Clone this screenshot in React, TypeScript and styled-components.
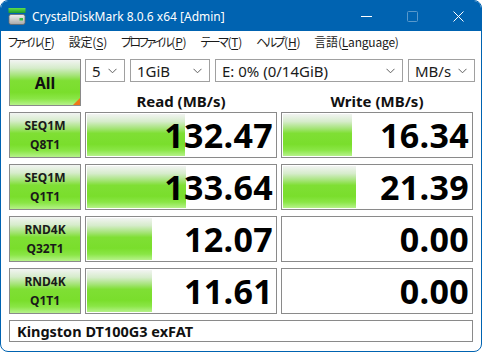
import styled, { createGlobalStyle } from 'styled-components';

const GlobalStyle = createGlobalStyle`
  html, body {
    margin: 0;
    padding: 0;
    background: #ffffff;
  }
  body {
    font-family: "Noto Sans", "Noto Sans CJK JP", sans-serif;
  }
`;

const BLUE = '#0063b1';

const Window = styled.div`
  width: 482px;
  height: 352px;
  box-sizing: border-box;
  border: 1px solid ${BLUE};
  border-radius: 8px;
  overflow: hidden;
  display: flex;
  flex-direction: column;
  background: #ffffff;
`;

const TitleBar = styled.div`
  height: 30px;
  flex: none;
  background: ${BLUE};
  display: flex;
  align-items: center;
  color: #ffffff;
`;

const AppIcon = styled.svg`
  width: 18px;
  height: 18px;
  margin: 0 6px 0 7px;
  flex: none;
`;

const Title = styled.div`
  font-size: 12px;
  flex: 1;
  white-space: nowrap;
`;

const Caption = styled.div<{ $dim?: boolean }>`
  width: 46px;
  height: 30px;
  display: flex;
  align-items: center;
  justify-content: center;
  opacity: ${p => (p.$dim ? 0.35 : 1)};
`;

const MenuBar = styled.div`
  height: 21px;
  flex: none;
  display: flex;
  align-items: center;
  gap: 14px;
  padding: 0 7px;
  font-family: "Noto Sans CJK JP", "Noto Sans", sans-serif;
  font-feature-settings: "palt";
  font-size: 12px;
  color: #1a1a1a;
  background: #ffffff;
`;

const MenuItem = styled.span`
  white-space: nowrap;
  letter-spacing: -0.2px;
  u {
    text-underline-offset: 2px;
  }
`;

const Kana = styled.span`
  letter-spacing: -2.5px;
  margin-right: 1px;
`;

const Body = styled.div`
  flex: 1;
  display: flex;
  flex-direction: column;
  gap: 6px;
  padding: 7px 8px 0 8px;
`;

const Grid = styled.div<{ $height: number }>`
  display: grid;
  grid-template-columns: 72px 192px 192px;
  column-gap: 4px;
  height: ${p => p.$height}px;
`;

const greenFill = `linear-gradient(to bottom,
  #f2f4f2 0%,
  #d6eccb 18%,
  #a6e47a 34%,
  #7fdf34 46%,
  #7ade2c 72%,
  #8ae646 86%,
  #b6f28a 100%)`;

const AllButton = styled.div`
  position: relative;
  grid-row: span 2;
  box-sizing: border-box;
  border: 1px solid #8a8a8a;
  background: ${greenFill};
  display: flex;
  align-items: center;
  justify-content: center;
  font-weight: 700;
  font-size: 16px;
  color: #111;
  &::after {
    content: '';
    position: absolute;
    right: 0;
    bottom: 0;
    width: 0;
    height: 0;
    border-style: solid;
    border-width: 0 0 7px 7px;
    border-color: transparent transparent #f07818 transparent;
  }
`;

const TopRight = styled.div`
  grid-column: span 2;
  display: grid;
  grid-template-rows: 23px 24px;
`;

const SelectRow = styled.div`
  display: flex;
  gap: 5px;
`;

const Select = styled.div<{ $w: number }>`
  width: ${p => p.$w}px;
  height: 23px;
  box-sizing: border-box;
  border: 1px solid #a0a0a0;
  background: #ffffff;
  display: flex;
  align-items: center;
  justify-content: space-between;
  padding: 0 7px 0 6px;
  font-size: 15px;
  color: #1a1a1a;
  white-space: nowrap;
`;

const Headers = styled.div`
  display: grid;
  grid-template-columns: 192px 192px;
  column-gap: 4px;
  align-items: end;
`;

const Header = styled.div`
  text-align: center;
  font-weight: 700;
  font-size: 15px;
  line-height: 18px;
  color: #111;
  transform: translateY(4px);
`;

const Label = styled.div`
  box-sizing: border-box;
  border: 1px solid #8a8a8a;
  background: ${greenFill};
  display: flex;
  flex-direction: column;
  align-items: center;
  justify-content: center;
  font-weight: 700;
  font-size: 12px;
  line-height: 19px;
  color: #1a1a1a;
`;

const Meter = styled.div`
  position: relative;
  box-sizing: border-box;
  border: 1px solid #8a8a8a;
  background: #ffffff;
  padding: 1px;
  display: flex;
`;

const Bar = styled.div`
  height: 100%;
  background: ${greenFill};
`;

const Value = styled.div`
  position: absolute;
  inset: 0;
  display: flex;
  align-items: center;
  justify-content: flex-end;
  padding-right: 3px;
  font-family: "Open Sans", "Noto Sans", sans-serif;
  font-weight: 700;
  font-size: 34px;
  letter-spacing: 0.3px;
  color: #000;
`;

const Footer = styled.div`
  height: 22px;
  box-sizing: border-box;
  width: 464px;
  border: 1px solid #8a8a8a;
  display: flex;
  align-items: center;
  padding-left: 7px;
  font-weight: 700;
  font-size: 14.5px;
  color: #111;
`;

const Chevron = () => (
  <svg width="9" height="6" viewBox="0 0 9 6">
    <path d="M0.5 0.8 L4.5 4.8 L8.5 0.8" fill="none" stroke="#606060" strokeWidth="1" />
  </svg>
);

const rows = [
  { a: 'SEQ1M', b: 'Q8T1', read: '132.47', rw: 98, write: '16.34', ww: 69 },
  { a: 'SEQ1M', b: 'Q1T1', read: '133.64', rw: 99, write: '21.39', ww: 73 },
  { a: 'RND4K', b: 'Q32T1', read: '12.07', rw: 65, write: '0.00', ww: 0 },
  { a: 'RND4K', b: 'Q1T1', read: '11.61', rw: 65, write: '0.00', ww: 0 },
];

// [label, narrow kana?, access key, rest]
const menu: [string, boolean, string, string][] = [
  ['ファイル', true, 'F', ')'],
  ['設定', false, 'S', ')'],
  ['プロファイル', true, 'P', ')'],
  ['テーマ', true, 'T', ')'],
  ['ヘルプ', true, 'H', ')'],
  ['言語', false, 'L', 'anguage)'],
];

export default function App() {
  return (
    <>
      <GlobalStyle />
      <Window>
        <TitleBar>
          <AppIcon viewBox="0 0 18 18">
            <defs>
              <linearGradient id="gTop" x1="0" y1="0" x2="0" y2="1">
                <stop offset="0" stopColor="#5fe04a" />
                <stop offset="1" stopColor="#1f9a2a" />
              </linearGradient>
              <linearGradient id="gBox" x1="0" y1="0" x2="0" y2="1">
                <stop offset="0" stopColor="#f0f0f0" />
                <stop offset="1" stopColor="#a8a8a8" />
              </linearGradient>
            </defs>
            <rect x="0.5" y="1" width="17" height="5" fill="url(#gTop)" />
            <rect x="1" y="7.5" width="16" height="10" rx="2" fill="url(#gBox)" stroke="#6a6a6a" strokeWidth="0.8" />
            <rect x="11.5" y="11" width="3.5" height="2.5" fill="#34c040" />
          </AppIcon>
          <Title>CrystalDiskMark 8.0.6 x64 [Admin]</Title>
          <Caption>
            <svg width="11" height="11" viewBox="0 0 11 11">
              <path d="M0 5.5 H11" stroke="#fff" strokeWidth="1" />
            </svg>
          </Caption>
          <Caption $dim>
            <svg width="11" height="11" viewBox="0 0 11 11">
              <rect x="0.5" y="0.5" width="10" height="10" rx="1" fill="none" stroke="#fff" strokeWidth="1" />
            </svg>
          </Caption>
          <Caption>
            <svg width="11" height="11" viewBox="0 0 11 11">
              <path d="M0.5 0.5 L10.5 10.5 M10.5 0.5 L0.5 10.5" stroke="#fff" strokeWidth="1" />
            </svg>
          </Caption>
        </TitleBar>
        <MenuBar>
          {menu.map(([name, kana, key, post]) => (
            <MenuItem key={name}>
              {kana ? <Kana>{name}</Kana> : name}(<u>{key}</u>{post}
            </MenuItem>
          ))}
        </MenuBar>
        <Body>
          <Grid $height={47}>
            <AllButton>All</AllButton>
            <TopRight>
              <SelectRow>
                <Select $w={40}>5<Chevron /></Select>
                <Select $w={80}>1GiB<Chevron /></Select>
                <Select $w={188}>E: 0% (0/14GiB)<Chevron /></Select>
                <Select $w={67}>MB/s<Chevron /></Select>
              </SelectRow>
              <Headers>
                <Header>Read (MB/s)</Header>
                <Header>Write (MB/s)</Header>
              </Headers>
            </TopRight>
          </Grid>
          {rows.map((r, i) => (
            <Grid $height={46} key={i}>
              <Label>
                <span>{r.a}</span>
                <span>{r.b}</span>
              </Label>
              <Meter>
                <Bar style={{ width: r.rw }} />
                <Value>{r.read}</Value>
              </Meter>
              <Meter>
                <Bar style={{ width: r.ww }} />
                <Value>{r.write}</Value>
              </Meter>
            </Grid>
          ))}
          <Footer>Kingston DT100G3 exFAT</Footer>
        </Body>
      </Window>
    </>
  );
}
